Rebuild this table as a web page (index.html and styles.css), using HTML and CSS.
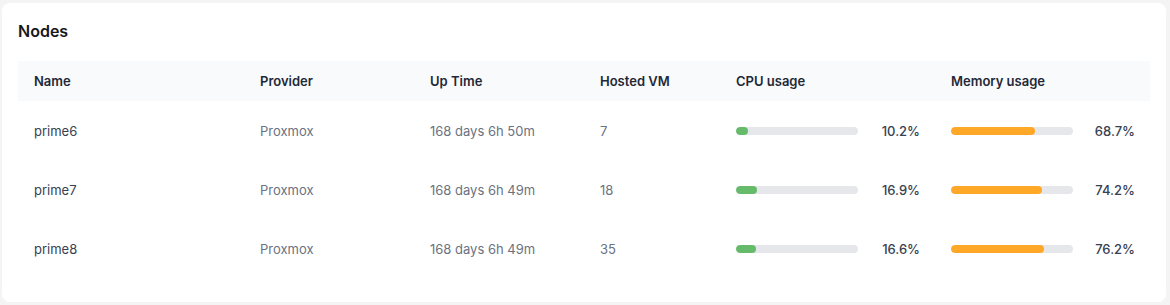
FILE: index.html
```html
<!DOCTYPE html>
<html lang="en">
<head>
<meta charset="utf-8">
<title>Nodes</title>
<link rel="stylesheet" href="styles.css">
</head>
<body>
<section class="card">
  <h2 class="card-title">Nodes</h2>
  <table class="nodes">
    <colgroup>
      <col class="c-name"><col class="c-prov"><col class="c-up"><col class="c-vm"><col class="c-cpu"><col class="c-mem">
    </colgroup>
    <thead>
      <tr><th>Name</th><th>Provider</th><th>Up Time</th><th>Hosted VM</th><th>CPU usage</th><th>Memory usage</th></tr>
    </thead>
    <tbody>
      <tr>
        <td class="name">prime6</td><td class="muted">Proxmox</td><td class="muted">168 days 6h 50m</td><td class="muted">7</td>
        <td><div class="usage"><div class="bar"><div class="fill cpu" style="width:10.2%"></div></div><span class="pct">10.2%</span></div></td>
        <td><div class="usage"><div class="bar"><div class="fill mem" style="width:68.7%"></div></div><span class="pct">68.7%</span></div></td>
      </tr>
      <tr>
        <td class="name">prime7</td><td class="muted">Proxmox</td><td class="muted">168 days 6h 49m</td><td class="muted">18</td>
        <td><div class="usage"><div class="bar"><div class="fill cpu" style="width:16.9%"></div></div><span class="pct">16.9%</span></div></td>
        <td><div class="usage"><div class="bar"><div class="fill mem" style="width:74.2%"></div></div><span class="pct">74.2%</span></div></td>
      </tr>
      <tr>
        <td class="name">prime8</td><td class="muted">Proxmox</td><td class="muted">168 days 6h 49m</td><td class="muted">35</td>
        <td><div class="usage"><div class="bar"><div class="fill cpu" style="width:16.6%"></div></div><span class="pct">16.6%</span></div></td>
        <td><div class="usage"><div class="bar"><div class="fill mem" style="width:76.2%"></div></div><span class="pct">76.2%</span></div></td>
      </tr>
    </tbody>
  </table>
</section>
</body>
</html>
```
FILE: styles.css
```css
* { box-sizing: border-box; }
html, body { margin: 0; }
body {
  background: #f4f4f5;
  padding: 3px 4px 3px 2px;
  font-family: Inter, "Noto Sans", sans-serif;
  color: #111827;
}
.card {
  background: #ffffff;
  border-radius: 8px;
  padding: 17px 16px 24px 16px;
  width: 1164px;
  height: 299px;
}
.card-title {
  margin: 0 0 19px 0;
  font-size: 16px;
  line-height: 22px;
  font-weight: 600;
  color: #18181b;
}
.nodes {
  width: 1132px;
  border-collapse: collapse;
  table-layout: fixed;
  font-size: 13px;
}
.c-name { width: 226px; }
.c-prov { width: 170px; }
.c-up { width: 170px; }
.c-vm { width: 136px; }
.c-cpu { width: 215px; }
.c-mem { width: 215px; }
.nodes thead tr { background: #f9fafb; }
.nodes th {
  height: 40px;
  padding: 0 16px;
  text-align: left;
  font-weight: 600;
  color: #1f2937;
}
.nodes td {
  height: 59px;
  padding: 0 16px;
  vertical-align: middle;
}
.name { color: #374151; font-weight: 400; }
.muted { color: #6b7280; }
.usage {
  display: flex;
  align-items: center;
  justify-content: space-between;
}
.bar {
  width: 122px;
  height: 8px;
  border-radius: 4px;
  background: #e5e7eb;
  overflow: hidden;
}
.fill { height: 100%; border-radius: 4px; }
.fill.cpu { background: #66bb6a; }
.fill.mem { background: #ffa726; }
.pct {
  font-weight: 500;
  color: #374151;
  margin-right: -1px;
}
```
